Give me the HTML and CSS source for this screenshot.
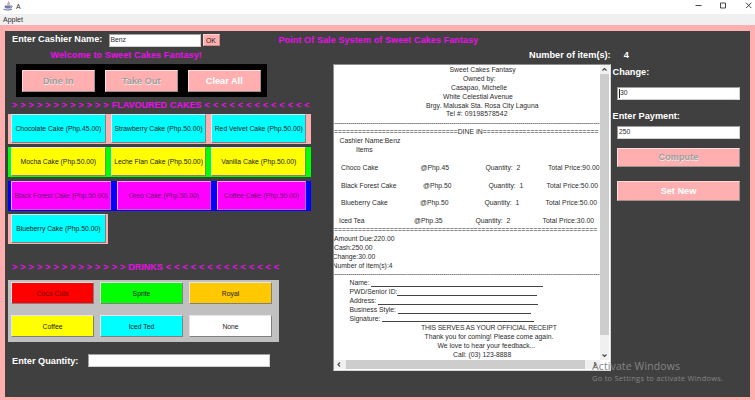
FILE: index.html
```html
<!DOCTYPE html>
<html lang="en">
<head>
<meta charset="utf-8">
<title>A</title>
<link rel="stylesheet" href="styles.css">
</head>
<body>
<header class="titlebar">
  <svg class="java" viewBox="0 0 10 12" width="10" height="12"><path d="M5.500 1.500C7 2.500 3.500 3.500 5.200 5.200M7 3C5 4 6.500 4.300 5.900 5.200" fill="none" stroke="#d8655f" stroke-width=".9"/><path d="M1.500 5.500h6.300c0 2-.8 2.700-1.800 3H3.200C2.200 8.200 1.500 7.500 1.500 5.500z" fill="#727ba8"/><path d="M7.700 6c2-.5 2 1.500-.6 2.200M.5 9.200c2 1 6.500 1 8.500 0" fill="none" stroke="#5c659a" stroke-width="1"/></svg>
  <span class="apptitle">A</span>
  <svg class="controls" viewBox="0 0 60 12" width="60" height="12" fill="none" stroke="#333" stroke-width=".9"><path d="M3.500 5.500h6M28.500 3h5v5h-5zM54 2.700l5.400 5.400M59.400 2.700l-5.400 5.400"/></svg>
</header>
<nav class="menubar">Applet</nav>
<main class="frame">
  <div class="toprow">
    <label class="head cashier">Enter Cashier Name:</label>
    <div class="field name">Benz</div>
    <button class="btn ok">OK</button>
    <h1 class="pos">Point Of Sale System of Sweet Cakes Fantasy</h1>
  </div>
  <div class="subrow">
    <h2 class="welcome">Welcome to Sweet Cakes Fantasy!</h2>
    <span class="head items">Number of item(s):</span><span class="head count">4</span>
  </div>
  <div class="columns">
    <section class="left">
      <div class="modes">
        <button class="btn pink disabled">Dine In</button><button class="btn pink disabled">Take Out</button><button class="btn pink">Clear All</button>
      </div>
      <h3 class="banner flavours">&gt; &gt; &gt; &gt; &gt; &gt; &gt; &gt; &gt; &gt; &gt; &gt; FLAVOURED CAKES &lt; &lt; &lt; &lt; &lt; &lt; &lt; &lt; &lt; &lt; &lt; &lt; &lt;</h3>
      <div class="cakes rose"><button class="btn cyan">Chocolate Cake (Php.45.00)</button><button class="btn cyan">Strawberry Cake (Php.50.00)</button><button class="btn cyan">Red Velvet Cake (Php.50.00)</button></div>
      <div class="cakes lime"><button class="btn yellow">Mocha Cake (Php.50.00)</button><button class="btn yellow">Leche Flan Cake (Php.50.00)</button><button class="btn yellow">Vanilla Cake (Php.50.00)</button></div>
      <div class="cakes blue"><button class="btn magenta wide">Black Forest Cake (Php.50.00)</button><button class="btn magenta">Oreo Cake (Php.50.00)</button><button class="btn magenta narrow">Coffee Cake (Php.50.00)</button></div>
      <div class="cakes rose single"><button class="btn cyan">Blueberry Cake (Php.50.00)</button></div>
      <h3 class="banner drinkhead">&gt; &gt; &gt; &gt; &gt; &gt; &gt; &gt; &gt; &gt; &gt; &gt; &gt; &gt; DRINKS &lt; &lt; &lt; &lt; &lt; &lt; &lt; &lt; &lt; &lt; &lt; &lt; &lt; &lt;</h3>
      <div class="drinks">
        <button class="btn red">Coca Cola</button><button class="btn green">Sprite</button><button class="btn orange">Royal</button>
        <button class="btn yellow">Coffee</button><button class="btn cyan">Iced Ted</button><button class="btn white">None</button>
      </div>
      <div class="quantity"><label class="head">Enter Quantity:</label><div class="field qty"></div></div>
    </section>
    <section class="receipt">
      <div class="paper">
        <p class="in-shop">Sweet Cakes Fantasy</p>
        <p class="in-owned">Owned by:</p>
        <p class="in-owner">Casapao, Michelle</p>
        <p class="in-street">White Celestial Avenue</p>
        <p class="in-city">Brgy. Malusak Sta. Rosa City Laguna</p>
        <p class="in-tel">Tel #: 09198578542</p>
        <p class="dash">-----------------------------------------------------------------------------------------------------------------------------------</p>
        <p class="equal">===============================DINE IN=============================</p>
        <p class="in-cashier">Cashier Name:Benz</p>
        <p class="in-items">Items</p>
        <p></p>
        <p class="item choco"><span>Choco Cake</span><span>@Php.45</span><span>Quantity:</span><span>2</span><span>Total Price:90.00</span></p>
        <p></p>
        <p class="item forest"><span>Black Forest Cake</span><span>@Php.50</span><span>Quantity:</span><span>1</span><span>Total Price:50.00</span></p>
        <p></p>
        <p class="item berry"><span>Blueberry Cake</span><span>@Php.50</span><span>Quantity:</span><span>1</span><span>Total Price:50.00</span></p>
        <p></p>
        <p class="item tea"><span>Iced Tea</span><span>@Php.35</span><span>Quantity:</span><span>2</span><span>Total Price:30.00</span></p>
        <p class="equal">==================================================================</p>
        <p class="total">Amount Due:220.00</p>
        <p class="total">Cash:250.00</p>
        <p class="total shifted">Change:30.00</p>
        <p class="total shifted">Number of item(s):4</p>
        <p class="dash">-----------------------------------------------------------------------------------------------------------------------------------</p>
        <p class="form f-name">Name: <i></i></p>
        <p class="form f-id">PWD/Senior ID:<i></i></p>
        <p class="form f-address">Address: <i></i></p>
        <p class="form f-style">Business Style: <i></i></p>
        <p class="form f-sign">Signature: <i></i></p>
        <p class="in-official">THIS SERVES AS YOUR OFFICIAL RECEIPT</p>
        <p class="in-thanks">Thank you for coming! Please come again.</p>
        <p class="in-feedback">We love to hear your feedback...</p>
        <p class="in-call">Call: (03) 123-8888</p>
      </div>
      <div class="vbar"><svg viewBox="0 0 9 9"><path d="M2.500 5.500l2-2 2 2"/></svg><div class="vthumb"></div><svg class="end" viewBox="0 0 9 9"><path d="M2.500 3.500l2 2 2-2"/></svg></div>
      <div class="hbar"><svg viewBox="0 0 9 9"><path d="M6 2.500l-2 2 2 2"/></svg><div class="hthumb"></div><svg class="end" viewBox="0 0 9 9"><path d="M3 2.500l2 2-2 2"/></svg></div>
    </section>
    <section class="right">
      <label class="head">Change:</label>
      <div class="field change"><span class="caret"></span>30</div>
      <label class="head paylabel">Enter Payment:</label>
      <div class="field pay">250</div>
      <button class="btn pink disabled compute">Compute</button>
      <button class="btn pink setnew">Set New</button>
    </section>
  </div>
</main>
<aside class="watermark"><div class="wm1">Activate Windows</div><div class="wm2">Go to Settings to activate Windows.</div></aside>
</body>
</html>
```

FILE: styles.css
```css
* { box-sizing: border-box; margin: 0; padding: 0; }
body {
  width: 755px; height: 400px; overflow: hidden; position: relative;
  background: #fff; color: #2c2c2c;
  font: 6.8px/9px "Liberation Sans", Arial, sans-serif;
}
.titlebar { height: 14px; display: flex; background: #fff; }
.java { margin-left: 3px; }
.apptitle { margin: 2px 0 0 3px; font-size: 6.8px; }
.controls { margin-left: auto; margin-right: 3.500px; }
.menubar { height: 11px; padding: 1px 3px; background: #f0f0f0; font-size: 7px; }
.frame {
  height: 375px; background: #404040; border: solid #ffafaf;
  border-width: 6px 5px 3px;
}
.head { color: #fff; font-size: 9.200px; line-height: 12px; font-weight: bold; white-space: nowrap; }
.field {
  background: #fff; border: 1px solid #d0d0d0; border-top-color: #a0a0a0; border-left-color: #a0a0a0;
  height: 13px; line-height: 10px; color: #2c2c2c; padding-left: 1px;
}
.btn {
  display: flex; align-items: center; justify-content: center; white-space: nowrap;
  font: 6.800px/9px "Liberation Sans", Arial, sans-serif; color: #1a1a1a;
  border: 1px solid #808080; border-top-color: #e6e6e6; border-left-color: #e6e6e6;
  background: #ffafaf;
}
.toprow { height: 18px; display: flex; padding: 2px 0 0 7px; }
.cashier { width: 96.500px; }
.name { width: 92px; height: 13px; margin-top: 1px; }
.ok { width: 17px; height: 12px; margin: 1px 0 0 2px; border-color: #ffd3d3 #c98b8b #c98b8b #ffd3d3; }
.pos, .welcome, .banner { color: #e80fe8; font-size: 9px; line-height: 12px; font-weight: bold; white-space: nowrap; }
.pos { margin: 1px 0 0 59px; letter-spacing: .1px; }
.subrow { height: 15px; display: flex; padding-left: 45.500px; }
.welcome { width: 478.500px; letter-spacing: .13px; }
.count { margin-left: 13px; }
.columns { display: flex; }
.left { width: 328px; padding-left: 3px; }
.modes { margin-left: 8px; width: 251px; height: 33px; background: #000; padding: 6px; display: flex; gap: 10.500px; }
.modes .btn { width: 72.500px; height: 22px; }
.btn.pink { font-size: 9.200px; font-weight: bold; color: #fff; border-color: #ffdcdc #a09090 #a09090 #ffdcdc; }
.btn.disabled { color: #a39c9c; text-shadow: .5px .5px #eee; }
.banner { margin: 2px 0 3px 4px; font-size: 9px; word-spacing: .55px; }
.cakes { width: 303px; height: 30px; margin-bottom: 3.400px; padding: 0 3px; display: flex; gap: 5.500px; }
.cakes .btn { width: 94.700px; height: 29px; flex: none; }
.cakes.single { width: 100px; }
.rose { background: #ffafaf; }
.lime { background: #0f0; }
.blue { background: #00f; }
.blue .btn { color: #700870; border-color: #ff9cff #c05fe0 #c05fe0 #ff9cff; }
.cakes .wide { width: 100px; }
.cakes .narrow { width: 89.500px; }
.cyan { background: #0ff; }
.yellow { background: #ff0; }
.magenta { background: #f0f; }
.red { background: #f00; color: #700; }
.green { background: #0f0; }
.orange { background: #ffc800; }
.white { background: #fff; }
.drinkhead { margin-top: 17px; margin-bottom: 7px; }
.drinks {
  width: 271px; height: 62px; background: #c0c0c0; padding: 2px 3px;
  display: grid; grid-template-columns: 83px 83px 83px; grid-auto-rows: 22px; column-gap: 6px; row-gap: 11px;
}
.quantity { display: flex; margin: 12px 0 0 4px; }
.quantity .head { width: 76px; margin-top: 1px; }
.qty { width: 182px; }

.receipt {
  width: 278px; height: 307px; background: #fff; border: 1px solid #909090; border-right-color: #d8d8d8; border-bottom-color: #d8d8d8;
  display: grid; grid-template-columns: 266px 9px; grid-template-rows: 295px 9px;
}
.paper { overflow: hidden; padding-top: 1px; }
.paper p { height: 8.900px; line-height: 8.900px; white-space: nowrap; }
.in-shop { padding-left: 115.500px; }
.in-owned { padding-left: 129px; }
.in-owner { padding-left: 117px; }
.in-street { padding-left: 109px; }
.in-city { padding-left: 92px; }
.in-tel { padding-left: 112px; letter-spacing: .1px; }
.dash { letter-spacing: -.239px; }
.equal { letter-spacing: .02px; }
.in-cashier { padding-left: 5.500px; }
.in-items { padding-left: 22px; }
.item { display: grid; padding-left: 7px; }
.item span:last-child { letter-spacing: .06px; }
.choco { grid-template-columns: 79.500px 65px 31px 31.500px auto; }
.forest { grid-template-columns: 82px 65.500px 31px 27px auto; }
.berry { grid-template-columns: 79px 64.500px 31px 30px auto; }
.tea { padding-left: 5px; grid-template-columns: 75px 61.500px 31px 36px auto; }
.shifted { text-indent: -1.500px; }
.form { padding-left: 15.500px; display: flex; white-space: pre !important; }
.form i { height: 7.500px; border-bottom: 1px solid #444; }
.f-name i { width: 171.500px; }
.f-id i { width: 140px; }
.f-address i { width: 159.500px; }
.f-style i { width: 133px; }
.f-sign i { width: 152px; }
.in-official { padding-left: 87px; letter-spacing: -.13px; }
.in-thanks { padding-left: 90.500px; }
.in-feedback { padding-left: 103.500px; }
.in-call { padding-left: 119px; }
.vbar, .hbar { background: #f0f0f0; display: flex; }
.vbar { flex-direction: column; }
.hbar { width: 266px; }
.vbar svg, .hbar svg { width: 9px; height: 9px; fill: none; stroke: #444; stroke-width: 1.100; flex: none; }
.vthumb { height: 261px; background: #cdcdcd; }
.hthumb { width: 239px; margin-left: 3px; background: #cdcdcd; }
.end { margin-top: auto; }
.hbar .end { margin: 0 0 0 auto; }

.right { width: 139px; padding: 2px 0 0 1.500px; display: flex; flex-direction: column; align-items: flex-start; }
.right .field, .right .btn { margin-left: 4.500px; width: 123px; }
.right .change { margin-top: 9px; display: flex; }
.caret { width: 1px; height: 9px; margin-top: 1px; background: #222; }
.paylabel { margin-top: 10px; }
.right .pay { margin-top: 4px; }
.right .compute { margin-top: 9px; height: 19px; }
.right .setnew { margin-top: 14px; height: 20px; }

.watermark { position: absolute; left: 592px; top: 360px; color: #858585; font-family: "Open Sans", "Noto Sans", sans-serif; white-space: nowrap; }
.wm1 { font-size: 10.500px; line-height: 13px; letter-spacing: .12px; }
.wm2 { font-size: 7.500px; line-height: 11px; letter-spacing: .24px; }
```
